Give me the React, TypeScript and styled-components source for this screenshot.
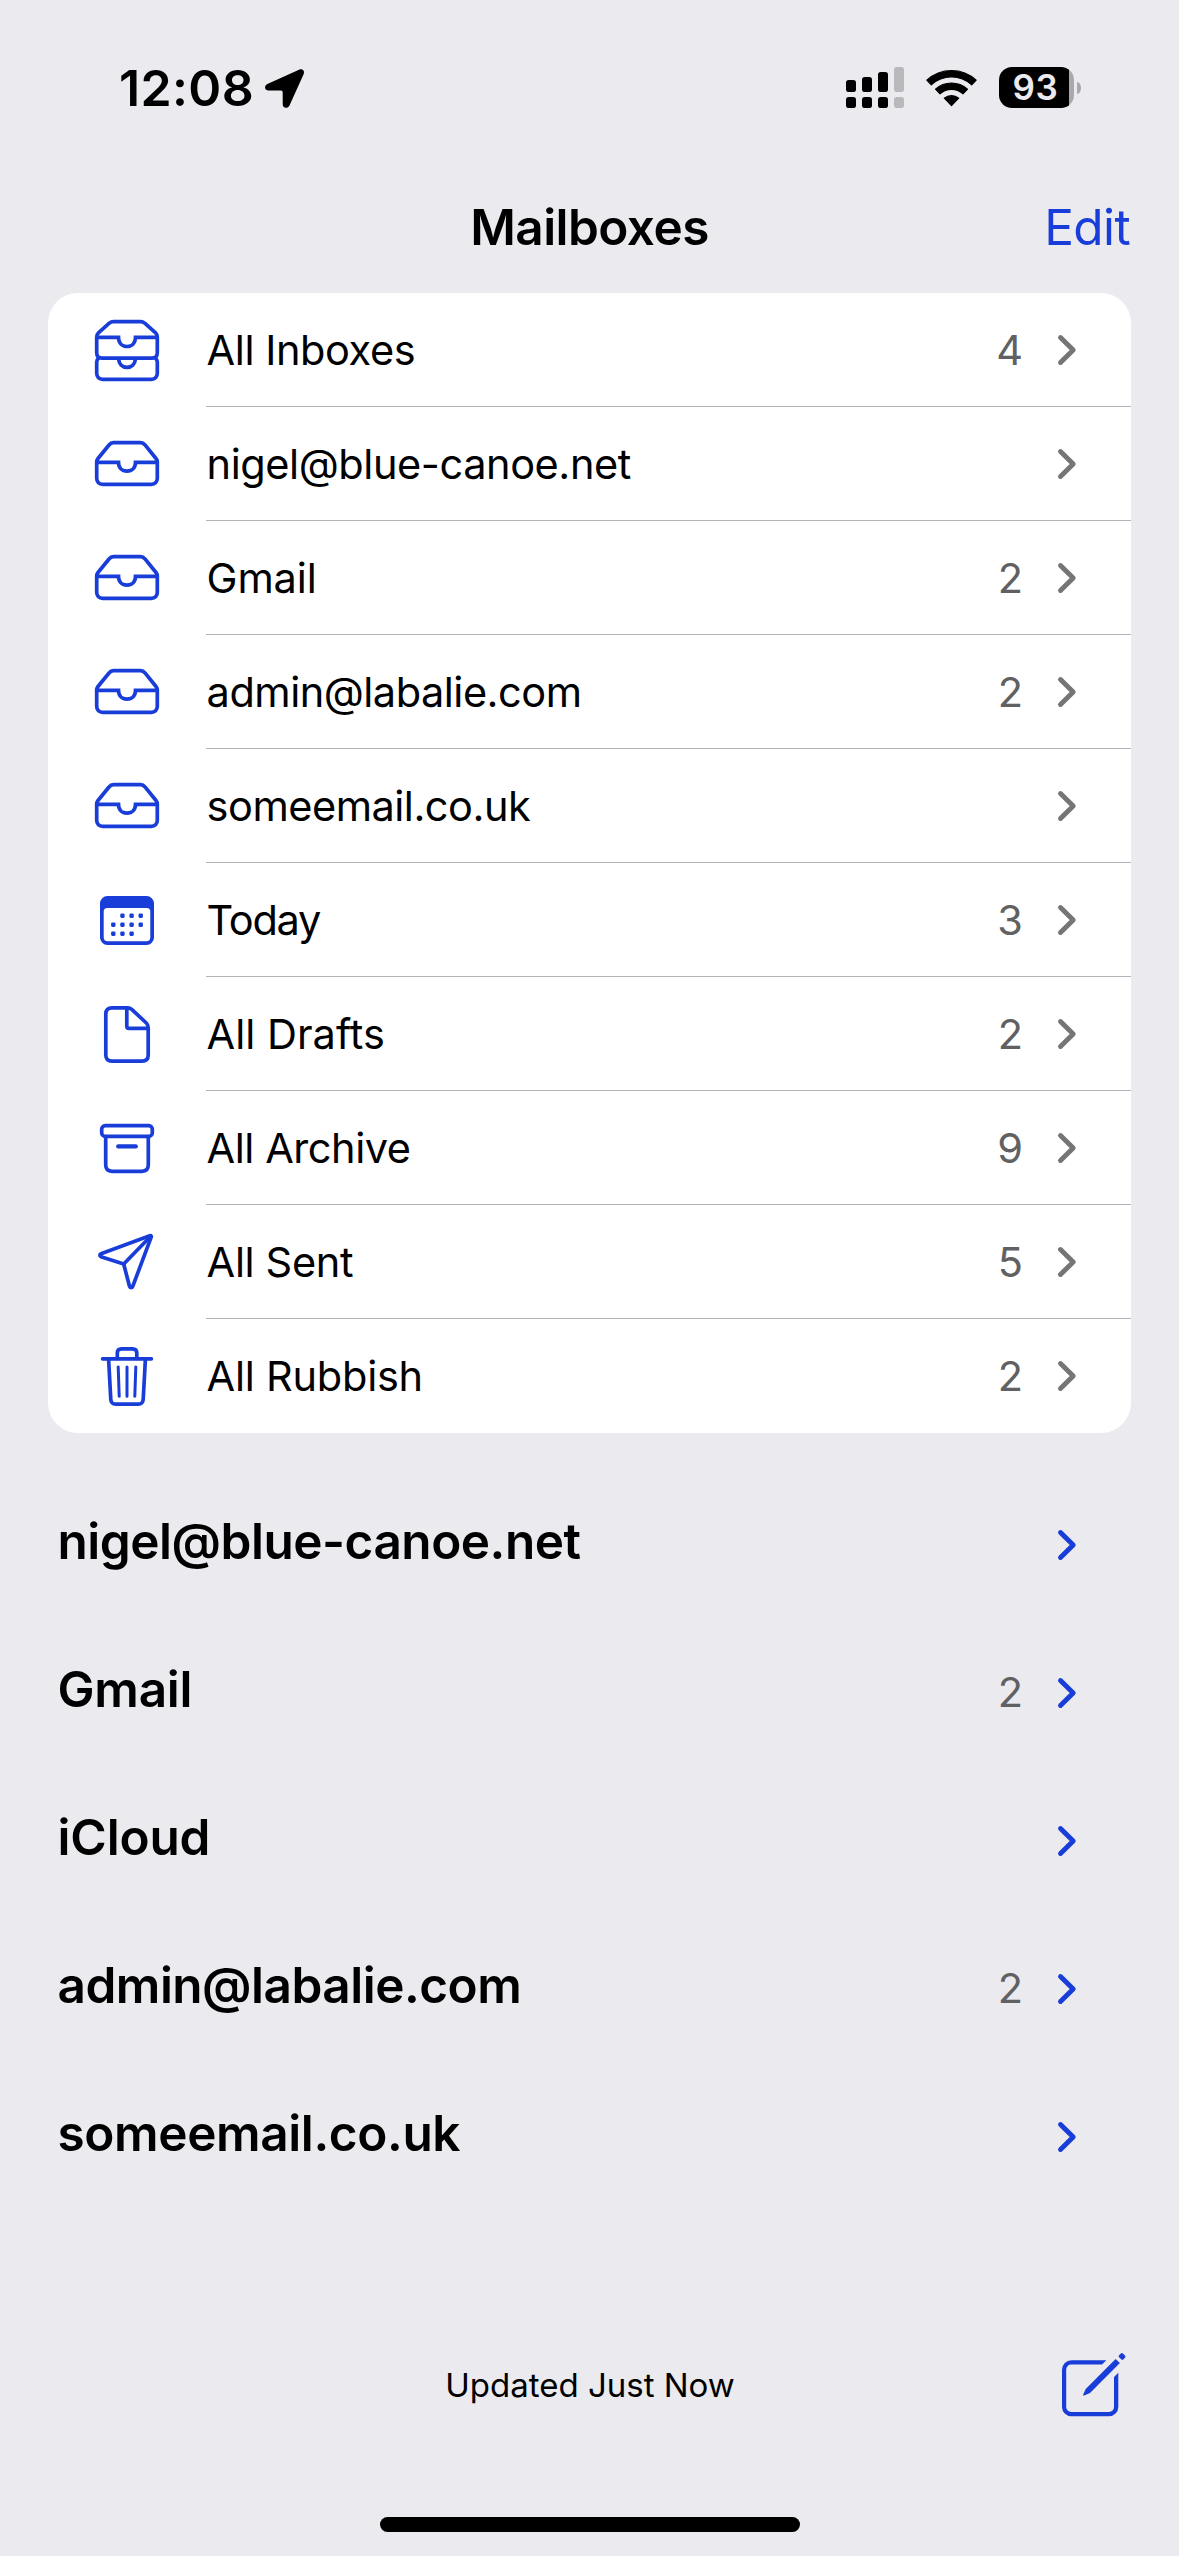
import React from 'react';
import styled, { createGlobalStyle } from 'styled-components';

const colors = {
  page: '#ebeaef',
  card: '#ffffff',
  ink: '#000000',
  accent: '#193dd8',
  count: '#616163',
  chevron: '#757578',
  separator: '#b4b4b7',
  faded: '#b9b9bc',
};

const GlobalStyle = createGlobalStyle`
  *, *::before, *::after { box-sizing: border-box; }
  body {
    margin: 0;
    background: ${colors.page};
    font-family: Inter, "Liberation Sans", sans-serif;
    color: ${colors.ink};
  }
  svg { display: block; flex: none; overflow: visible; }
`;

const Screen = styled.div`
  display: flex;
  flex-direction: column;
  width: 1179px;
  height: 2556px;
  background: ${colors.page};
  overflow: hidden;
`;

const StatusBar = styled.header`
  display: flex;
  align-items: center;
  justify-content: space-between;
  height: 176px;
  padding: 0 98px 0 119px;
`;

const StatusLeft = styled.div`
  display: flex;
  align-items: center;
  gap: 11px;
`;

const Clock = styled.time`
  font-size: 50px;
  font-weight: 600;
  line-height: 60px;
  letter-spacing: 0.37px;
`;

const StatusRight = styled.div`
  display: flex;
  align-items: center;
  gap: 22px;
  margin-top: -1px;
`;

const Battery = styled.div`
  display: flex;
  align-items: center;
  gap: 3px;
`;

const BatteryBody = styled.div<{ $level: number }>`
  display: flex;
  align-items: center;
  width: 75px;
  height: 41px;
  padding-left: 13.5px;
  border-radius: 13px;
  background: linear-gradient(
    to right,
    ${colors.ink} ${(p) => p.$level}%,
    #a9a9ac ${(p) => p.$level}%
  );
  color: ${colors.page};
  font-size: 35px;
  font-weight: 600;
  line-height: 41px;
  letter-spacing: 0.6px;
`;

const BatteryCap = styled.div`
  width: 4px;
  height: 12px;
  border-radius: 0 4px 4px 0 / 0 6px 6px 0;
  background: #a9a9ac;
`;

const NavBar = styled.nav`
  display: grid;
  grid-template-columns: 1fr auto 1fr;
  align-items: center;
  height: 117px;
  padding: 0 49px 15px;
`;

const NavTitle = styled.h1`
  grid-column: 2;
  margin: 0;
  font-size: 49.5px;
  font-weight: 600;
  line-height: 60px;
  letter-spacing: -0.55px;
`;

const EditButton = styled.button`
  justify-self: end;
  padding: 0;
  border: 0;
  background: none;
  color: ${colors.accent};
  font: 400 49.5px/60px Inter, "Liberation Sans", sans-serif;
  letter-spacing: -0.6px;
`;

const Card = styled.ul`
  margin: 0 48px;
  padding: 0;
  list-style: none;
  border-radius: 30px;
  background: ${colors.card};
  overflow: hidden;
`;

const MailboxRow = styled.li`
  display: flex;
  height: 114px;
`;

const IconCell = styled.div`
  display: flex;
  align-items: center;
  justify-content: center;
  width: 158px;
`;

const RowBody = styled.div`
  display: flex;
  flex: 1;
  align-items: center;
  padding-right: 55.5px;
  border-bottom: 1px solid ${colors.separator};

  ${MailboxRow}:last-child & {
    border-bottom-color: transparent;
  }
`;

const RowLabel = styled.span<{ $tracking: number }>`
  flex: 1;
  padding-left: 0.6px;
  font-size: 41.5px;
  line-height: 50px;
  letter-spacing: ${(p) => p.$tracking}px;
  white-space: nowrap;
`;

const Count = styled.span`
  margin-right: 34.5px;
  color: ${colors.count};
  font-size: 41.5px;
  line-height: 50px;
`;

const Accounts = styled.section`
  margin-top: 38px;
`;

const AccountRow = styled.div`
  display: flex;
  align-items: center;
  height: 148px;
  padding: 0 103.5px 0 57.5px;

  ${Count} {
    padding-bottom: 2px;
  }
`;

const AccountName = styled.h2<{ $tracking: number }>`
  flex: 1;
  margin: 0;
  padding-bottom: 8px;
  font-size: 49.5px;
  font-weight: 600;
  line-height: 60px;
  letter-spacing: ${(p) => p.$tracking}px;
  white-space: nowrap;
`;

const Toolbar = styled.footer`
  display: grid;
  grid-template-columns: 1fr auto 1fr;
  align-items: center;
  height: 100px;
  margin-top: auto;
  padding: 0 53px 0 54px;
`;

const SyncStatus = styled.span`
  grid-column: 2;
  font-size: 33px;
  line-height: 40px;
`;

const ComposeButton = styled.button`
  justify-self: end;
  padding: 0;
  border: 0;
  background: none;
  color: ${colors.accent};
`;

const HomeIndicator = styled.div`
  width: 420px;
  height: 15px;
  margin: 82px auto 24px;
  border-radius: 8px;
  background: ${colors.ink};
`;

const Glyph = styled.svg.attrs({ fill: 'none' })`
  color: ${colors.accent};
  stroke: currentColor;
  stroke-width: 3.7;
  stroke-linecap: round;
  stroke-linejoin: round;
`;

const LocationIcon = () => (
  <svg width="39" height="39" viewBox="0 0 39 39">
    <path d="M3.6 21.5H16q1.7 0 1.7 1.7V35c0 4.8 5.2 5 6.9 1.2L38.6 5.2C40 1.8 37.5-.8 34 .7L2.4 15C-1.2 16.7-.6 21.5 3.6 21.5Z" />
  </svg>
);

const SignalIcon = () => (
  <svg width="58" height="41" viewBox="0 0 58 41">
    {[13, 10, 5, 0].map((top, i) => (
      <g key={top} fill={i === 3 ? colors.faded : colors.ink}>
        <rect x={i * 16} y={top} width="10" height={25 - top} rx="2.8" />
        <rect x={i * 16} y="30" width="10" height="11" rx="2.8" />
      </g>
    ))}
  </svg>
);

const WifiIcon = () => (
  <svg width="51" height="38" viewBox="0 0 51 38">
    <g stroke="#000" strokeWidth="1.2" strokeLinejoin="round">
      <path d="M.8 11.2A36.3 36.3 0 0 1 50.2 11.2L45.7 15.8A29.7 29.7 0 0 0 5.3 15.8Z" />
      <path d="M9.5 20.2A23.7 23.7 0 0 1 41.5 20.2L37 24.8A17.3 17.3 0 0 0 14 24.8Z" />
      <path d="M18.3 29.2A11 11 0 0 1 32.7 29.2L25.5 36.6Z" />
    </g>
  </svg>
);

const Chevron = ({ color }: { color: string }) => (
  <svg width="18" height="30" viewBox="0 0 18 30" fill="none">
    <path d="M2.5 2.5 15.2 15 2.5 27.5" stroke={color} strokeWidth="4.9" strokeLinecap="round" strokeLinejoin="round" />
  </svg>
);

const AllInboxesIcon = () => (
  <Glyph width="64" height="61" viewBox="0 0 64 61">
    <path d="M1.7 17.3V32.5C1.7 36 3.5 38.2 7 38.2H57C60.5 38.2 62.3 36 62.3 32.5V17.3C62.3 15 61.8 14 60.6 12.9L50 3.4C48.5 2.2 47.2 1.7 45.5 1.7H18.5C16.8 1.7 15.5 2.2 14 3.4L3.4 12.9C2.2 14 1.7 15 1.7 17.3Z" />
    <path strokeLinejoin="miter" d="M1.7 17.3H23.5C23.5 22.8 27 26.5 32 26.5S40.5 22.8 40.5 17.3H62.3" />
    <path d="M3.6 38.2C2.3 39.2 1.7 40.4 1.7 42V53.3C1.7 57 4 59.3 7.7 59.3H56.3C60 59.3 62.3 57 62.3 53.3V42C62.3 40.4 61.7 39.2 60.4 38.2" />
    <path d="M23.6 39C24 44.2 27.3 47.3 32 47.3S40 44.2 40.4 39" />
  </Glyph>
);

const InboxIcon = () => (
  <Glyph width="64" height="46" viewBox="0 0 64 46">
    <path d="M1.7 21.3V37.3C1.7 41 4 43.3 7.7 43.3H56.3C60 43.3 62.3 41 62.3 37.3V21.3C62.3 19.6 62 18.8 61 17.5L50.2 4.2C48.8 2.5 47.5 1.7 45.5 1.7H18.5C16.5 1.7 15.2 2.5 13.8 4.2L3 17.5C2 18.8 1.7 19.6 1.7 21.3Z" />
    <path strokeLinejoin="miter" d="M1.7 21.3H23.5C23.5 26.8 27 30.2 32 30.2S40.5 26.8 40.5 21.3H62.3" />
  </Glyph>
);

/* Day marks as [column, row] on the month sheet. */
const dayMarks = [
  [1, 0], [2, 0], [3, 0],
  [0, 1], [1, 1], [2, 1], [3, 1],
  [0, 2], [1, 2], [2, 2],
];

const CalendarIcon = () => (
  <svg width="54" height="49" viewBox="0 0 54 49" fill={colors.accent}>
    <path
      fillRule="evenodd"
      d="M7.5 0H46.5A7.5 7.5 0 0 1 54 7.5V41.5A7.5 7.5 0 0 1 46.5 49H7.5A7.5 7.5 0 0 1 0 41.5V7.5A7.5 7.5 0 0 1 7.5 0ZM7.2 12A3.5 3.5 0 0 0 3.7 15.5V41.2A4 4 0 0 0 7.7 45.2H46.3A4 4 0 0 0 50.3 41.2V15.5A3.5 3.5 0 0 0 46.8 12Z"
    />
    {dayMarks.map(([c, r]) => (
      <rect key={`${c}-${r}`} x={11.1 + c * 9.15} y={17.5 + r * 9} width="4.4" height="4.4" rx="1.3" />
    ))}
  </svg>
);

const DraftsIcon = () => (
  <Glyph width="46" height="57" viewBox="0 0 46 57">
    <path d="M8 1.8H23.5C25.5 1.8 26.6 2.3 28 3.6L42.3 17C43.7 18.4 44.2 19.6 44.2 21.5V49C44.2 53 42 55.2 38 55.2H8C4 55.2 1.8 53 1.8 49V8C1.8 4 4 1.8 8 1.8Z" />
    <path d="M22.8 2.2V20.3C22.8 21.7 23.5 22.4 24.9 22.4H43.8" />
  </Glyph>
);

const ArchiveIcon = () => (
  <Glyph width="54" height="49" viewBox="0 0 54 49">
    <rect x="1.7" y="1.7" width="50.6" height="10.6" rx="3.4" />
    <path d="M5.7 12.5V40.8C5.7 45 8 47.3 12 47.3H42C46 47.3 48.3 45 48.3 40.8V12.5" />
    <path strokeWidth="4.2" d="M18.2 22.4H35.8" />
  </Glyph>
);

const SentIcon = () => (
  <Glyph width="58.6" height="55.4" viewBox="0 0 58.6 55.4">
    <path d="M51.8 1.8 3 19.7C1.5 20.3 1.5 22.3 3 22.8L25.7 30 31.5 52.3C32 54 34 54 34.7 52.5L53.2 3.2C53.6 2.2 52.8 1.4 51.8 1.8Z" />
    <path d="M25.7 30 53 2" />
  </Glyph>
);

const TrashIcon = () => (
  <Glyph width="52" height="59" viewBox="0 0 52 59">
    <path d="M1.6 11.8H50.4" />
    <path d="M16.3 11.5V6C16.3 3.2 17.8 1.8 20.5 1.8H31.5C34.2 1.8 35.8 3.2 35.8 6V11.5" />
    <path d="M7.6 12 9.8 52.5C10 55.6 11.8 57.2 14.8 57.2H37.2C40.2 57.2 42 55.6 42.2 52.5L44.4 12" />
    <path strokeWidth="3" d="M17.2 20 18.2 49.3M26 20V49.3M34.8 20 33.8 49.3" />
  </Glyph>
);

const ComposeIcon = () => (
  <svg width="64" height="64" viewBox="0 0 64 64" fill="currentColor">
    <path d="M44.3 7.3H9.5A9.5 9.5 0 0 0 0 16.8V54A9.3 9.3 0 0 0 9.3 63.3H47A9.3 9.3 0 0 0 56.3 54V19.7L52 24V54A5 5 0 0 1 47 59H9.3A5 5 0 0 1 4.2 54V16.6A5 5 0 0 1 9.3 11.5H40Z" />
    <path d="M53.6 6 57.9 10.1 28 40 22.2 42.4C21.4 42.7 20.9 42.2 21.2 41.4L23.7 35.9Z" />
    <path d="M57.1 2.3 58.6.7C59.4-.1 60.4-.1 61.2.7L62.9 2.4C63.6 3.2 63.6 4.2 62.8 5L61.2 6.5C60.7 7 60 7 59.5 6.5L57.1 4.2C56.5 3.6 56.5 2.9 57.1 2.3Z" />
  </svg>
);

interface Mailbox {
  label: string;
  icon: () => React.JSX.Element;
  tracking: number;
  count?: number;
}

const mailboxes: Mailbox[] = [
  { label: 'All Inboxes', icon: AllInboxesIcon, tracking: -0.43, count: 4 },
  { label: 'nigel@blue-canoe.net', icon: InboxIcon, tracking: -0.43 },
  { label: 'Gmail', icon: InboxIcon, tracking: -0.15, count: 2 },
  { label: 'admin@labalie.com', icon: InboxIcon, tracking: -0.5, count: 2 },
  { label: 'someemail.co.uk', icon: InboxIcon, tracking: -0.5 },
  { label: 'Today', icon: CalendarIcon, tracking: -1.3, count: 3 },
  { label: 'All Drafts', icon: DraftsIcon, tracking: 0, count: 2 },
  { label: 'All Archive', icon: ArchiveIcon, tracking: -0.46, count: 9 },
  { label: 'All Sent', icon: SentIcon, tracking: -0.35, count: 5 },
  { label: 'All Rubbish', icon: TrashIcon, tracking: -0.24, count: 2 },
];

const accounts = [
  { name: 'nigel@blue-canoe.net', tracking: -0.48 },
  { name: 'Gmail', tracking: -0.26, count: 2 },
  { name: 'iCloud', tracking: -0.15 },
  { name: 'admin@labalie.com', tracking: -0.5, count: 2 },
  { name: 'someemail.co.uk', tracking: -0.38 },
];

export default function App() {
  return (
    <>
      <GlobalStyle />
      <Screen>
        <StatusBar>
          <StatusLeft>
            <Clock>12:08</Clock>
            <LocationIcon />
          </StatusLeft>
          <StatusRight>
            <SignalIcon />
            <WifiIcon />
            <Battery>
              <BatteryBody $level={93}>93</BatteryBody>
              <BatteryCap />
            </Battery>
          </StatusRight>
        </StatusBar>

        <NavBar>
          <NavTitle>Mailboxes</NavTitle>
          <EditButton>Edit</EditButton>
        </NavBar>

        <Card>
          {mailboxes.map(({ label, icon: Icon, tracking, count }) => (
            <MailboxRow key={label}>
              <IconCell>
                <Icon />
              </IconCell>
              <RowBody>
                <RowLabel $tracking={tracking}>{label}</RowLabel>
                {count !== undefined && <Count>{count}</Count>}
                <Chevron color={colors.chevron} />
              </RowBody>
            </MailboxRow>
          ))}
        </Card>

        <Accounts>
          {accounts.map(({ name, tracking, count }) => (
            <AccountRow key={name}>
              <AccountName $tracking={tracking}>{name}</AccountName>
              {count !== undefined && <Count>{count}</Count>}
              <Chevron color={colors.accent} />
            </AccountRow>
          ))}
        </Accounts>

        <Toolbar>
          <SyncStatus>Updated Just Now</SyncStatus>
          <ComposeButton aria-label="Compose">
            <ComposeIcon />
          </ComposeButton>
        </Toolbar>
        <HomeIndicator />
      </Screen>
    </>
  );
}
